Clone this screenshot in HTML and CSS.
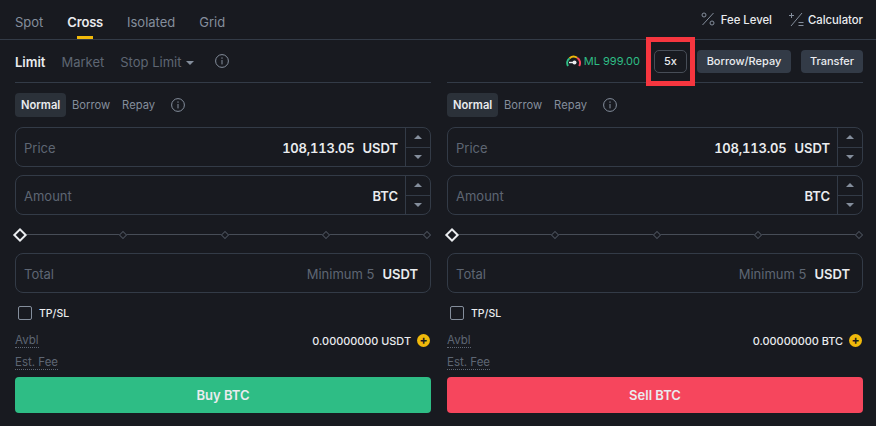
FILE: index.html
```html
<!DOCTYPE html>
<html>
<head>
    <meta charset="utf-8" />
    <title>Trade</title>
    <link rel="stylesheet" href="styles.css">
</head>
<body>
    <div class="tabs">
        <div class="tab-list">
            <span class="tab">Spot</span>
            <span class="tab active">Cross</span>
            <span class="tab">Isolated</span>
            <span class="tab">Grid</span>
        </div>
        <div class="tools">
            <span class="tool">
                <svg class="tool-pct" width="14" height="14" viewBox="0 0 14 14" fill="none" stroke="#848e9c" stroke-width="1">
                    <path d="M12.5 1 1.5 13" />
                    <circle cx="3" cy="3" r="2" />
                    <circle cx="11" cy="11" r="2" />
                </svg>
                Fee Level
            </span>
            <span class="tool">
                <svg class="tool-calc" width="15" height="15" viewBox="0 0 15 15" fill="none" stroke="#848e9c" stroke-width="1">
                    <path d="M13 1 2 14" />
                    <path d="M0 3.5h5M2.5 1v5" />
                    <path d="M9.5 10.5h5M9.5 13.5h5" />
                </svg>
                Calculator
            </span>
        </div>
    </div>

    <div class="types">
        <span class="type active">Limit</span>
        <span class="type">Market</span>
        <span class="type">Stop Limit<i class="caret"></i></span>
        <svg class="info type-info" width="14" height="14" viewBox="0 0 14 14" fill="none" stroke="#848e9c">
            <circle cx="7" cy="7" r="6.4" />
            <path d="M7 6v4.4M7 3.4v1.4" />
        </svg>
        <div class="actions">
            <svg class="gauge" width="15" height="12" viewBox="0 0 15 12" fill="none" stroke-width="2">
                <path d="M2 11A6 6 0 0 1 3.6 3.2" stroke="#2ebd85" />
                <path d="M3.6 3.2A6 6 0 0 1 11.2 2.8" stroke="#f0b90b" />
                <path d="M11.2 2.8A6 6 0 0 1 13.2 11" stroke="#f6465d" />
                <path d="M3 7.5h6" stroke="#eaecef" stroke-width="1.4" />
                <circle cx="8.5" cy="7.5" r="2" fill="#eaecef" stroke="none" />
            </svg>
            <span class="ml">ML 999.00</span>
            <span class="btn-outline">5x</span>
            <span class="btn-dark">Borrow/Repay</span>
            <span class="btn-dark btn-transfer">Transfer</span>
            <div class="highlight"></div>
        </div>
    </div>

    <div class="panels">
        <div class="panel">
            <div class="modes">
                <span class="mode active">Normal</span>
                <span class="mode">Borrow</span>
                <span class="mode">Repay</span>
                <svg class="info" width="14" height="14" viewBox="0 0 14 14" fill="none" stroke="#848e9c">
                    <circle cx="7" cy="7" r="6.4" />
                    <path d="M7 6v4.4M7 3.4v1.4" />
                </svg>
            </div>
            <div class="field">
                <span class="label">Price</span>
                <span class="value">108,113.05</span>
                <span class="unit">USDT</span>
                <div class="stepper"><span><i class="up"></i></span><span><i class="down"></i></span></div>
            </div>
            <div class="field">
                <span class="label">Amount</span>
                <span class="unit">BTC</span>
                <div class="stepper"><span><i class="up"></i></span><span><i class="down"></i></span></div>
            </div>
            <div class="slider">
                <i class="knob"></i><i class="dot"></i><i class="dot"></i><i class="dot"></i><i class="dot"></i>
            </div>
            <div class="field total">
                <span class="label">Total</span>
                <span class="hint">Minimum 5</span>
                <span class="unit">USDT</span>
            </div>
            <label class="check"><i class="box"></i>TP/SL</label>
            <div class="line">
                <span class="dotted">Avbl</span>
                <span class="balance">0.00000000 USDT<i class="plus">+</i></span>
            </div>
            <div class="line fee"><span class="dotted">Est. Fee</span></div>
            <div class="submit buy">Buy BTC</div>
        </div>

        <div class="panel">
            <div class="modes">
                <span class="mode active">Normal</span>
                <span class="mode">Borrow</span>
                <span class="mode">Repay</span>
                <svg class="info" width="14" height="14" viewBox="0 0 14 14" fill="none" stroke="#848e9c">
                    <circle cx="7" cy="7" r="6.4" />
                    <path d="M7 6v4.4M7 3.4v1.4" />
                </svg>
            </div>
            <div class="field">
                <span class="label">Price</span>
                <span class="value">108,113.05</span>
                <span class="unit">USDT</span>
                <div class="stepper"><span><i class="up"></i></span><span><i class="down"></i></span></div>
            </div>
            <div class="field">
                <span class="label">Amount</span>
                <span class="unit">BTC</span>
                <div class="stepper"><span><i class="up"></i></span><span><i class="down"></i></span></div>
            </div>
            <div class="slider">
                <i class="knob"></i><i class="dot"></i><i class="dot"></i><i class="dot"></i><i class="dot"></i>
            </div>
            <div class="field total">
                <span class="label">Total</span>
                <span class="hint">Minimum 5</span>
                <span class="unit">USDT</span>
            </div>
            <label class="check"><i class="box"></i>TP/SL</label>
            <div class="line">
                <span class="dotted">Avbl</span>
                <span class="balance">0.00000000 BTC<i class="plus">+</i></span>
            </div>
            <div class="line fee"><span class="dotted">Est. Fee</span></div>
            <div class="submit sell">Sell BTC</div>
        </div>
    </div>
</body>
</html>
```

FILE: styles.css
```css
* {
    box-sizing: border-box;
}

body {
    margin: 0;
    height: 426px;
    overflow: hidden;
    background-color: #181a20;
    color: #eaecef;
    font-family: "Inter", "Liberation Sans", sans-serif;
}

i {
    font-style: normal;
}

.tabs {
    display: flex;
    justify-content: space-between;
    height: 40px;
    padding: 0 13px 0 15px;
    border-bottom: 1px solid #333b47;
}

.tab-list {
    display: flex;
    gap: 24px;
}

.tab {
    position: relative;
    padding-top: 14px;
    font-size: 13px;
    line-height: 16px;
    color: #848e9c;
}

.tab.active {
    color: #eaecef;
    font-weight: 600;
    letter-spacing: -0.2px;
}

    .tab.active::after {
        content: "";
        position: absolute;
        left: 10px;
        bottom: 0;
        width: 16px;
        height: 3px;
        background-color: #f0b90b;
    }

.tools {
    display: flex;
    gap: 17px;
    padding-top: 12px;
}

.tool {
    display: flex;
    align-items: flex-start;
    font-size: 11.3px;
    font-weight: 500;
    line-height: 16px;
}

.tool-pct {
    margin-right: 6px;
}

.tool-calc {
    margin-right: 4px;
}

.types {
    display: flex;
    align-items: center;
    height: 42px;
    padding: 0 13px 0 15px;
}

.type {
    margin-top: 1px;
    margin-right: 16px;
    font-size: 13px;
    color: #5e6673;
}

.type.active {
    color: #eaecef;
    font-weight: 600;
}

.caret {
    display: inline-block;
    margin-left: 5px;
    vertical-align: 2px;
    border: 4px solid transparent;
    border-top: 4px solid #848e9c;
    border-bottom: 0;
}

.type-info {
    margin-left: 5px;
}

.actions {
    position: relative;
    display: flex;
    align-items: center;
    margin-left: auto;
}

.gauge {
    margin-right: 3px;
}

.ml {
    margin-right: 14px;
    font-size: 11px;
    color: #2ebd85;
}

.btn-outline,
.btn-dark {
    height: 23px;
    border-radius: 4px;
    font-size: 11px;
    font-weight: 500;
    line-height: 23px;
    text-align: center;
}

.btn-outline {
    width: 33px;
    margin-right: 10px;
    border: 1px solid #474d57;
    border-radius: 5px;
    line-height: 21px;
}

.btn-dark {
    width: 94px;
    margin-right: 10px;
    background-color: #333b47;
}

.btn-transfer {
    width: 62px;
    margin-right: 0;
}

.highlight {
    position: absolute;
    top: -13px;
    right: 168px;
    width: 49px;
    height: 49px;
    border: 5px solid #f6363f;
}

.panels {
    display: flex;
    gap: 16px;
    padding: 0 13px 0 15px;
}

.panel {
    flex: 1;
    border-top: 1px solid #333b47;
}

.modes {
    display: flex;
    align-items: center;
    height: 24px;
    margin-top: 10px;
    margin-bottom: 10px;
}

.mode {
    padding: 0 6px;
    height: 24px;
    font-size: 11.2px;
    line-height: 24px;
    color: #848e9c;
    border-radius: 4px;
}

.mode.active {
    width: 51px;
    background-color: #2b3139;
    color: #eaecef;
    font-weight: 600;
}

.modes .info {
    margin-left: 10px;
}

.field {
    display: flex;
    align-items: center;
    height: 40px;
    margin-bottom: 8px;
    padding-left: 8px;
    border: 1px solid #333b47;
    border-radius: 8px;
    font-size: 13px;
}

.label,
.value,
.unit,
.hint {
    margin-top: 2px;
}

.label {
    margin-right: auto;
    color: #5e6673;
}

.value {
    margin-right: 8px;
    font-weight: 600;
    font-variant-numeric: tabular-nums;
    letter-spacing: -0.2px;
}

.unit {
    font-weight: 600;
}

.hint {
    margin-right: 8px;
    color: #5e6673;
}

.stepper {
    display: flex;
    flex-direction: column;
    width: 25px;
    height: 100%;
    margin-left: 7px;
    border-left: 1px solid #333b47;
}

    .stepper span {
        flex: 1;
        display: flex;
        align-items: center;
        justify-content: center;
    }

        .stepper span:first-child {
            border-bottom: 1px solid #333b47;
        }

.up,
.down {
    border: 4px solid transparent;
}

.up {
    border-top: 0;
    border-bottom: 4px solid #848e9c;
}

.down {
    border-bottom: 0;
    border-top: 4px solid #848e9c;
}

.slider {
    position: relative;
    display: flex;
    align-items: center;
    justify-content: space-between;
    height: 14px;
    margin: 13px 0 11px;
    padding: 0 1px 0 0;
}

    .slider::before {
        content: "";
        position: absolute;
        left: 4px;
        right: 2px;
        top: 6px;
        height: 1px;
        background-color: #474d57;
    }

.knob,
.dot {
    position: relative;
    transform: rotate(45deg);
    background-color: #181a20;
}

.knob {
    width: 10px;
    height: 10px;
    border: 2px solid #eaecef;
}

.dot {
    width: 6px;
    height: 6px;
    border: 1px solid #474d57;
}

.total {
    padding-right: 12px;
    margin-bottom: 0;
}

.check {
    display: flex;
    align-items: center;
    gap: 7px;
    height: 14px;
    margin: 13px 0 0 3px;
    font-size: 10.5px;
    font-weight: 500;
}

.box {
    width: 14px;
    height: 14px;
    border: 1px solid #848e9c;
    border-radius: 2px;
}

.line {
    display: flex;
    align-items: center;
    justify-content: space-between;
    height: 16px;
    margin-top: 13px;
    font-size: 10.9px;
}

.fee {
    margin-top: 6px;
}

.dotted {
    color: #5e6673;
    border-bottom: 1px dotted #5e6673;
    line-height: 13px;
    font-size: 11.5px;
}

.balance {
    display: flex;
    align-items: center;
    gap: 6px;
    font-weight: 500;
}

.plus {
    width: 13px;
    height: 13px;
    margin-top: -2px;
    margin-right: 1px;
    border-radius: 50%;
    background-color: #f0b90b;
    color: #181a20;
    font-size: 12px;
    font-weight: 700;
    line-height: 12px;
    text-align: center;
}

.submit {
    height: 36px;
    margin-top: 6px;
    border-radius: 4px;
    font-size: 13px;
    font-weight: 600;
    line-height: 36px;
    text-align: center;
}

.buy {
    background-color: #2ebd85;
}

.sell {
    background-color: #f6465d;
}
```
